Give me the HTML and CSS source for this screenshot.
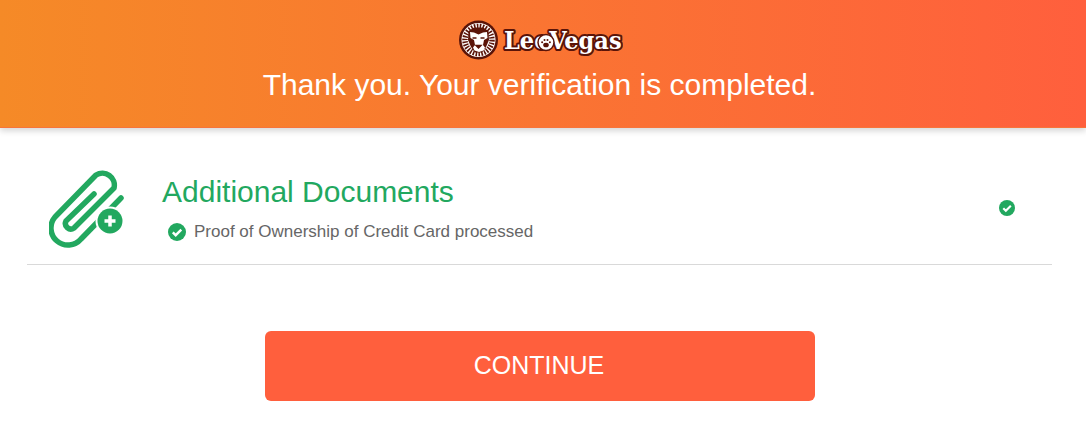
FILE: index.html
```html
<!DOCTYPE html>
<html lang="en">
<head>
    <meta charset="UTF-8">
    <meta name="viewport" content="width=device-width, initial-scale=1.0">
    <title>Verification completed</title>
    <link rel="stylesheet" href="styles.css">
</head>
<body>
    <header class="banner">
        <svg class="logo" width="164" height="40" viewBox="0 0 164 40" role="img" aria-label="LeoVegas">
            <!-- lion badge -->
            <circle cx="19.500" cy="20" r="19.500" fill="#5a1408"/>
            <circle cx="19.500" cy="20" r="17" fill="#fff"/>
            <circle cx="19.500" cy="20" r="13.500" fill="none" stroke="#5a1408" stroke-width="5.500" stroke-dasharray="1.500 1.300"/>
            <path d="M9.500 11l5.500-3.500h9l5.500 3.500 .5 9-3 7-4 5.500h-7l-4-5.500-3-7z" fill="#5a1408"/>
            <path d="M11 12l4 .5 4.500 2 4.500-2 4-.5 .5 6-3.500 2-1 5 2 2.500-1.500 3-4.500 1.500-4.500-1.500-1.500-3 2-2.500-1-5-3.500-2z" fill="#fff"/>
            <path d="M13.500 18h4M21.500 18h4M17 25.500h5l-2.500 2.500z" stroke="#5a1408" stroke-width="1.400" fill="#5a1408"/>
            <text class="logo-text" x="45" y="29">LeoVegas</text>
            <!-- paw inside the o -->
            <g transform="translate(1.500 0)">
                <circle cx="85.500" cy="22.500" r="8" fill="#fff" stroke="#5a1408" stroke-width="1.500"/>
                <g fill="#5a1408">
                    <ellipse cx="85.500" cy="25" rx="2.800" ry="2.300"/>
                    <circle cx="81.600" cy="22.300" r="1"/>
                    <circle cx="84" cy="20" r="1"/>
                    <circle cx="87" cy="20" r="1"/>
                    <circle cx="89.400" cy="22.300" r="1"/>
                </g>
            </g>
        </svg>
        <h1 class="banner-title">Thank you. Your verification is completed.</h1>
    </header>

    <main class="content">
        <section class="doc-row">
            <svg class="doc-icon" width="76" height="82" viewBox="0 0 76 82" fill="none">
                <path d="M45 26L17 53A5.500 5.500 0 0 0 25 60L65 20A12 12 0 0 0 47 7L6 49A17 17 0 0 0 32 71L72 30" stroke="#22a85f" stroke-width="5.500" stroke-linecap="round" stroke-linejoin="round"/>
                <circle cx="61" cy="53" r="14.500" fill="#fff"/>
                <circle cx="61" cy="53" r="12.500" fill="#22a85f"/>
                <path d="M61 47.500v11M55.500 53h11" stroke="#fff" stroke-width="3.500"/>
            </svg>
            <div class="doc-text">
                <h2 class="doc-title">Additional Documents</h2>
                <p class="doc-status">
                    <svg class="check" width="18" height="18" viewBox="0 0 18 18">
                        <circle cx="9" cy="9" r="9" fill="#22a85f"/>
                        <path d="M4.800 9.300L7.700 12.200L13.300 6.600" fill="none" stroke="#fff" stroke-width="2.400"/>
                    </svg>
                    Proof of Ownership of Credit Card processed
                </p>
            </div>
            <svg class="check check-end" width="16" height="16" viewBox="0 0 18 18">
                <circle cx="9" cy="9" r="9" fill="#22a85f"/>
                <path d="M4.800 9.300L7.700 12.200L13.300 6.600" fill="none" stroke="#fff" stroke-width="2.400"/>
            </svg>
        </section>
        <div class="actions">
            <button type="button" class="continue">CONTINUE</button>
        </div>
    </main>
</body>
</html>
```

FILE: styles.css
```css
body {
    font-family: "Liberation Sans", Arial, sans-serif;
    margin: 0;
    padding: 0;
    background-color: #fff;
}

.banner {
    height: 128px;
    box-sizing: border-box;
    padding: 20px 5px 0 0;
    display: flex;
    flex-direction: column;
    align-items: center;
    background: linear-gradient(to right, #f58a27, #ff5f3d);
    border-bottom: 1px solid #f8743a;
    box-shadow: 0 3px 6px rgba(0, 0, 0, 0.16);
}

.logo {
    display: block;
    flex: none;
}

.logo-text {
    font-family: "DejaVu Serif Condensed", "DejaVu Serif", serif;
    font-size: 25px;
    font-weight: bold;
    fill: #fff;
    stroke: #5a1408;
    stroke-width: 4px;
    paint-order: stroke;
    stroke-linejoin: round;
}

.banner-title {
    margin: 5px 2px 0 0;
    font-size: 30px;
    font-weight: normal;
    line-height: 40px;
    color: #fff;
}

.content {
    padding: 0 34px 0 27px;
}

.doc-row {
    height: 137px;
    box-sizing: border-box;
    padding: 40px 37px 0 22px;
    display: flex;
    align-items: flex-start;
    border-bottom: 1px solid #d9d9d9;
}

.doc-icon {
    flex: none;
    display: block;
}

.doc-text {
    flex: 1;
    margin: 2px 0 0 37px;
}

.doc-title {
    margin: 4px 0 0;
    font-size: 30px;
    font-weight: normal;
    line-height: 36px;
    color: #22a85f;
}

.doc-status {
    margin: 11px 0 0 6px;
    display: flex;
    align-items: center;
    gap: 8px;
    font-size: 17px;
    line-height: 22px;
    color: #666;
}

.check {
    flex: none;
    display: block;
}

.check-end {
    margin-top: 32px;
}

.actions {
    display: flex;
    justify-content: center;
    margin-top: 66px;
    padding-left: 1px;
}

.continue {
    width: 550px;
    height: 70px;
    padding: 0 2px 1px 0;
    font-family: inherit;
    font-size: 25px;
    border: none;
    border-radius: 6px;
    background-color: #ff5f3d;
    color: #fff;
    cursor: pointer;
}
```
